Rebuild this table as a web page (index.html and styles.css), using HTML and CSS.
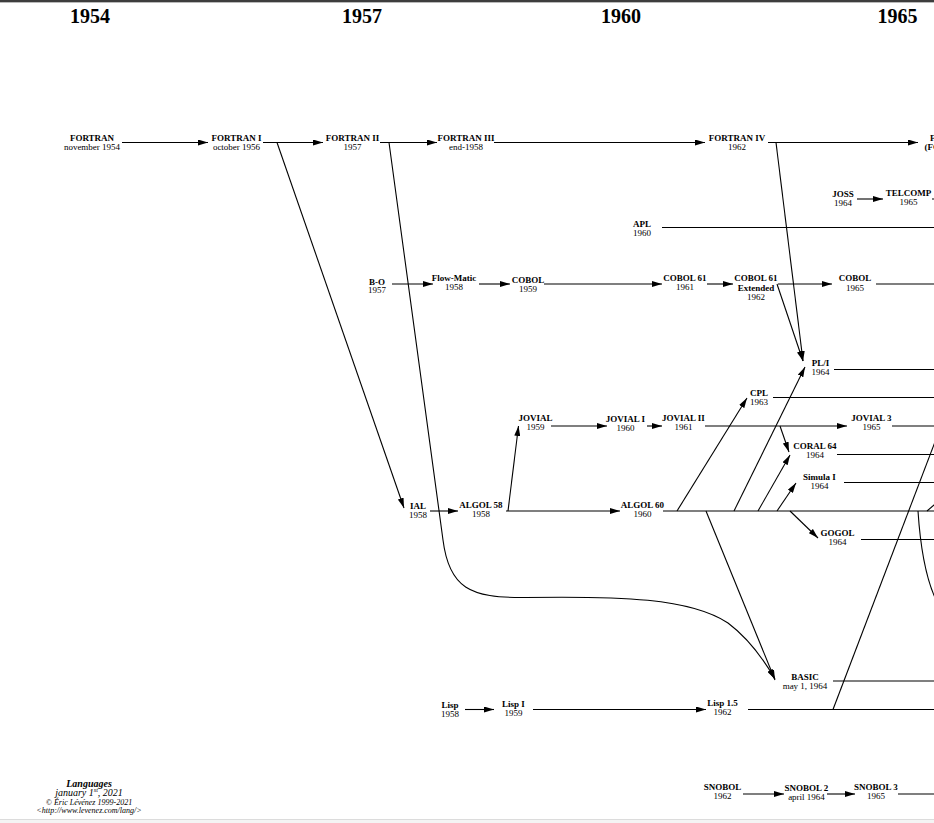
FILE: index.html
```html
<!DOCTYPE html>
<html>
<head>
<meta charset="utf-8">
<title>Languages</title>
<link rel="stylesheet" href="styles.css">
</head>
<body>
<div class="page">
  <div class="topbar"></div>
  <div class="canvas">
    <svg class="chart" width="934" height="816" viewBox="0 3 934 816" xmlns="http://www.w3.org/2000/svg">
      <defs>
        <marker id="ah" markerWidth="10" markerHeight="6" refX="10" refY="3" orient="auto" markerUnits="userSpaceOnUse">
          <path d="M0,0 L10,3 L0,6 z" class="head"/>
        </marker>
      </defs>

      <g class="years">
        <text x="90" y="23">1954</text>
        <text x="362" y="23">1957</text>
        <text x="621" y="23">1960</text>
        <text x="897.5" y="23">1965</text>
      </g>

      <g class="links">
        <!-- FORTRAN row -->
        <path class="arr" d="M122,142.5 H208"/>
        <path class="arr" d="M263,142.5 H323"/>
        <path class="arr" d="M380,142.5 H437"/>
        <path class="arr" d="M494,142.5 H705"/>
        <path class="arr" d="M768,142.5 H918"/>
        <path class="arr" d="M277,142.5 L404,508"/>
        <path class="arr" d="M389,142.5 L443,540 C449,588 470,598 525,597.5 C620,596 690,598 728,623 C748,638 764,660 775,679"/>
        <path class="arr" d="M776,142.5 L803,361"/>
        <!-- JOSS / APL -->
        <path class="arr" d="M857,199 H883"/>
        <path d="M932,199 H940"/>
        <path d="M662,227.5 H940"/>
        <!-- COBOL row -->
        <path class="arr" d="M392,284 H433"/>
        <path class="arr" d="M479,284 H510"/>
        <path class="arr" d="M544,284 H662"/>
        <path class="arr" d="M707,284 H733"/>
        <path class="arr" d="M778,284 H832"/>
        <path d="M876,284 H940"/>
        <path class="arr" d="M777,284 L803,361"/>
        <!-- PL/I, CPL -->
        <path d="M834,369.5 H940"/>
        <path d="M773,397.5 H940"/>
        <path class="arr" d="M734,511 L805,367"/>
        <path class="arr" d="M677,511 L747,398"/>
        <!-- JOVIAL row -->
        <path class="arr" d="M551,426 H607"/>
        <path class="arr" d="M647,426 H662"/>
        <path class="arr" d="M705,426 H847"/>
        <path d="M892,426 H940"/>
        <path class="arr" d="M780,426 L789,452"/>
        <path class="arr" d="M758,511 L790,455"/>
        <path d="M837,454.5 H940"/>
        <path class="arr" d="M777,511 L796,483"/>
        <path d="M844,482.5 H940"/>
        <path class="arr" d="M790,511 L818,538"/>
        <path d="M861,539.5 H940"/>
        <!-- ALGOL row -->
        <path class="arr" d="M430,511 H458"/>
        <path class="arr" d="M506,511 H620"/>
        <path class="arr" d="M508,511 L518.5,426"/>
        <path d="M663,511 H940"/>
        <path class="arr" d="M706,511 L775,680"/>
        <path d="M918,511 Q922,572 937,602"/>
        <path d="M927,511 L941,499"/>
        <!-- BASIC / Lisp -->
        <path d="M833,681 H940"/>
        <path class="arr" d="M465,709.5 H494"/>
        <path class="arr" d="M533,709.5 H706"/>
        <path d="M748,709.5 H940"/>
        <path d="M833,709.5 L938,434"/>
        <!-- SNOBOL -->
        <path class="arr" d="M743,794 H784"/>
        <path class="arr" d="M827,794 H855"/>
        <path d="M898,794 H940"/>
      </g>

      <g class="nodes">
        <text class="n" x="92" y="140.5">FORTRAN</text><text class="d" x="92" y="150">november 1954</text>
        <text class="n" x="236.5" y="140.5">FORTRAN I</text><text class="d" x="236.5" y="150">october 1956</text>
        <text class="n" x="352.5" y="140.5">FORTRAN II</text><text class="d" x="352.5" y="150">1957</text>
        <text class="n" x="466" y="140.5">FORTRAN III</text><text class="d" x="466" y="150">end-1958</text>
        <text class="n" x="737" y="140.5">FORTRAN IV</text><text class="d" x="737" y="150">1962</text>
        <text class="n start" x="930" y="140.5">FORTRAN 66</text><text class="n start" x="924.5" y="149.5">(FORTRAN IV)</text>

        <text class="n" x="843" y="197">JOSS</text><text class="d" x="843" y="206">1964</text>
        <text class="n" x="908.5" y="196">TELCOMP</text><text class="d" x="908.5" y="205">1965</text>
        <text class="n" x="642" y="226.5">APL</text><text class="d" x="642" y="235.5">1960</text>

        <text class="n" x="377" y="284.5">B-O</text><text class="d" x="377" y="292.5">1957</text>
        <text class="n" x="454" y="281">Flow-Matic</text><text class="d" x="454" y="289.5">1958</text>
        <text class="n" x="528" y="283">COBOL</text><text class="d" x="528" y="292">1959</text>
        <text class="n" x="685" y="280.5">COBOL 61</text><text class="d" x="685" y="289.5">1961</text>
        <text class="n" x="756" y="281">COBOL 61</text><text class="n" x="756" y="290.5">Extended</text><text class="d" x="756" y="299.5">1962</text>
        <text class="n" x="855" y="281">COBOL</text><text class="d" x="855" y="290.5">1965</text>

        <text class="n" x="820.5" y="366">PL/I</text><text class="d" x="820.5" y="375">1964</text>
        <text class="n" x="759" y="396">CPL</text><text class="d" x="759" y="404.5">1963</text>

        <text class="n" x="535.5" y="421">JOVIAL</text><text class="d" x="535.5" y="430">1959</text>
        <text class="n" x="625.5" y="421.5">JOVIAL I</text><text class="d" x="625.5" y="430.5">1960</text>
        <text class="n" x="683.5" y="421">JOVIAL II</text><text class="d" x="683.5" y="430">1961</text>
        <text class="n" x="871.5" y="421">JOVIAL 3</text><text class="d" x="871.5" y="430">1965</text>
        <text class="n" x="815" y="449">CORAL 64</text><text class="d" x="815" y="458">1964</text>
        <text class="n" x="819.5" y="480">Simula I</text><text class="d" x="819.5" y="489">1964</text>

        <text class="n" x="418" y="509">IAL</text><text class="d" x="418" y="518">1958</text>
        <text class="n" x="481" y="508">ALGOL 58</text><text class="d" x="481" y="517">1958</text>
        <text class="n" x="642.5" y="508">ALGOL 60</text><text class="d" x="642.5" y="517">1960</text>
        <text class="n" x="837.5" y="536">GOGOL</text><text class="d" x="837.5" y="545">1964</text>

        <text class="n" x="805" y="679.5">BASIC</text><text class="d" x="805" y="688.5">may 1, 1964</text>
        <text class="n" x="450" y="708">Lisp</text><text class="d" x="450" y="717">1958</text>
        <text class="n" x="513.5" y="707">Lisp I</text><text class="d" x="513.5" y="716">1959</text>
        <text class="n" x="722.5" y="706">Lisp 1.5</text><text class="d" x="722.5" y="715">1962</text>

        <text class="n" x="722.5" y="790">SNOBOL</text><text class="d" x="722.5" y="799">1962</text>
        <text class="n" x="806.5" y="791">SNOBOL 2</text><text class="d" x="806.5" y="800">april 1964</text>
        <text class="n" x="876" y="790">SNOBOL 3</text><text class="d" x="876" y="799">1965</text>
      </g>

      <g class="credits">
        <text class="title" x="89" y="787">Languages</text>
        <text class="date" x="89" y="796">january 1<tspan class="sup" dy="-4">st</tspan><tspan dy="4">, 2021</tspan></text>
        <text class="small" x="89" y="804.5">© Éric Lévénez 1999-2021</text>
        <text class="small" x="89" y="812.5">&lt;http://www.levenez.com/lang/&gt;</text>
      </g>
    </svg>
  </div>
  <div class="hscroll"></div>
</div>
</body>
</html>
```

FILE: styles.css
```css
html, body {
  margin: 0;
  padding: 0;
  background: #ffffff;
}

.page {
  width: 934px;
  height: 823px;
  display: flex;
  flex-direction: column;
  overflow: hidden;
  font-family: "Liberation Serif", "Times New Roman", serif;
}

.topbar {
  height: 3px;
  flex: none;
  background: linear-gradient(#3d3d3d 0, #3d3d3d 2px, #b9b9b9 2px);
}

.canvas {
  height: 816px;
  flex: none;
  overflow: hidden;
  background: #ffffff;
}

.chart {
  display: block;
}

.head {
  fill: #000000;
}

.links path {
  fill: none;
  stroke: #000000;
  stroke-width: 1.1;
}

.links .arr {
  marker-end: url(#ah);
}

.years text {
  font-family: "Liberation Serif", "Times New Roman", serif;
  font-weight: bold;
  font-size: 20px;
  text-anchor: middle;
  fill: #000000;
}

.nodes text {
  font-family: "Liberation Serif", "Times New Roman", serif;
  font-size: 9px;
  text-anchor: middle;
  fill: #000000;
}

.nodes .n {
  font-weight: bold;
}

.nodes .d {
  font-weight: normal;
}

.nodes .start {
  text-anchor: start;
}

.credits text {
  font-family: "Liberation Serif", "Times New Roman", serif;
  font-style: italic;
  text-anchor: middle;
  fill: #000000;
}

.credits .title {
  font-weight: bold;
  font-size: 10px;
}

.credits .date {
  font-size: 10px;
}

.credits .sup {
  font-size: 6px;
}

.credits .small {
  font-size: 8px;
}

.hscroll {
  height: 3px;
  flex: none;
  border-top: 1px solid #dcdcdc;
  background: #f4f4f4;
}
```
